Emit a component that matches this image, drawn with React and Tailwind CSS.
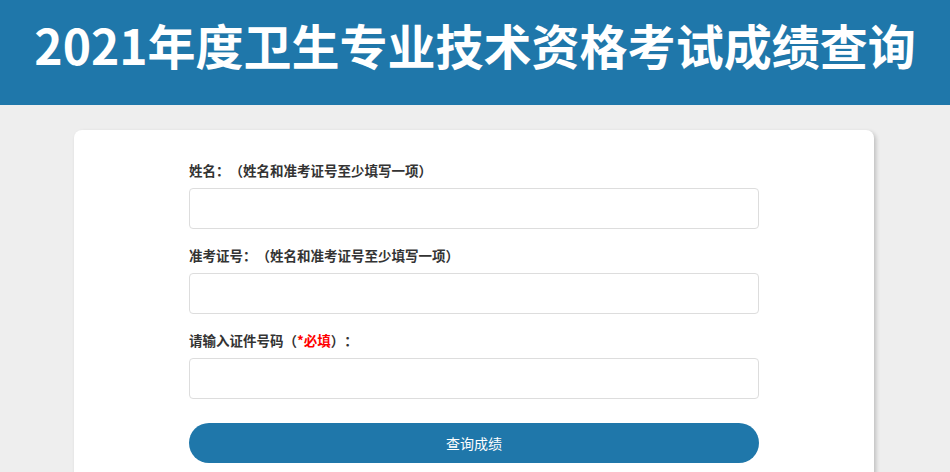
const font = { fontFamily: '"Noto Sans CJK SC", "Noto Sans", sans-serif' };

const Field = ({ label }) => (
  <div className="mb-4">
    <div className="mb-2 h-5 text-[13.5px] font-bold leading-5 text-[#333] [text-spacing-trim:space-all]">
      {label}
    </div>
    <input
      type="text"
      className="block h-[41px] w-full rounded-[4px] border border-[#dddddd] bg-white px-3 outline-none"
    />
  </div>
);

const App = () => {
  return (
    <div className="min-h-[472px] overflow-hidden bg-[#eeeeee]" style={font}>
      {/* HEADER */}
      <header className="flex h-[105px] justify-center bg-[#1f77aa] pt-[20px]">
        <h1 className="text-[48px] font-bold leading-none text-white">
          2021年度卫生专业技术资格考试成绩查询
        </h1>
      </header>

      {/* FORM CARD */}
      <div className="ml-[74px] mt-[25px] w-[800px] rounded-lg bg-white px-[115px] pb-10 pt-[30px] shadow-[2px_2px_4px_rgba(0,0,0,0.2)]">
        <Field label="姓名：（姓名和准考证号至少填写一项）" />
        <Field label="准考证号：（姓名和准考证号至少填写一项）" />
        <Field
          label={
            <>
              请输入证件号码（<span className="text-[#ff0000]">*必填</span>）：
            </>
          }
        />
        <button className="mt-6 block h-10 w-full rounded-full bg-[#1f77aa] text-sm text-white">
          查询成绩
        </button>
      </div>
    </div>
  );
};

export default App;
